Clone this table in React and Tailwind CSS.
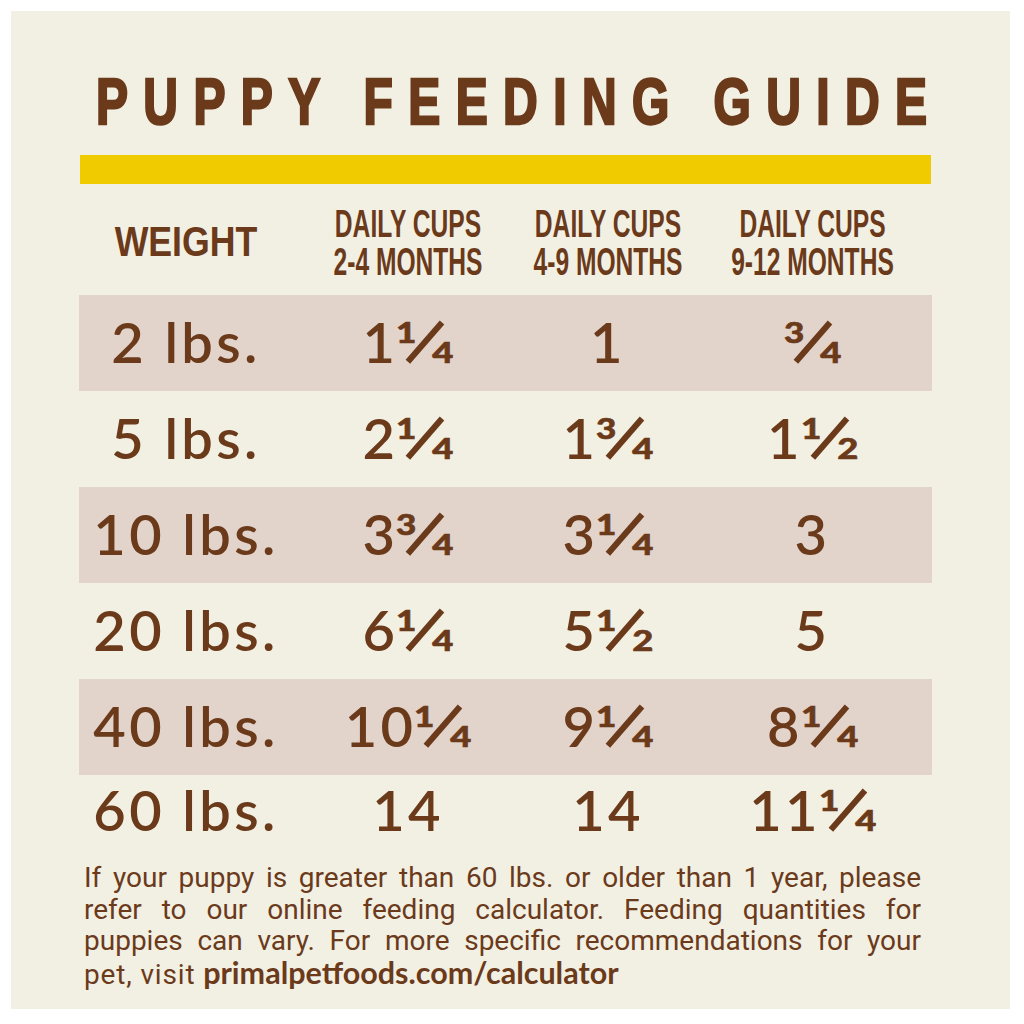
import React from "react";

const rows = [
  ["2 lbs.", "1¼", "1", "¾", true],
  ["5 lbs.", "2¼", "1¾", "1½", false],
  ["10 lbs.", "3¾", "3¼", "3", true],
  ["20 lbs.", "6¼", "5½", "5", false],
  ["40 lbs.", "10¼", "9¼", "8¼", true],
];

const num = { fontFamily: "Lato, 'Liberation Sans', sans-serif" };
const sans = { fontFamily: "'Liberation Sans', Arial, sans-serif" };
const body = { fontFamily: "Roboto, 'Liberation Sans', sans-serif" };

const FR = { "¼": ["1", "4"], "½": ["1", "2"], "¾": ["3", "4"] };

function Frac({ n, d, lead }) {
  return (
    <span className={`relative inline-block w-[57px] h-[40px] tracking-normal ${lead ? "-ml-[2px]" : ""}`}>
      <span className="absolute left-0 top-[-5px] scale-x-[1.25] origin-left text-[28px] leading-none font-black [-webkit-text-stroke:0.6px_#6b3a1b]">{n}</span>
      <span className="absolute left-[26px] top-[-7px] w-[5.5px] h-[52px] bg-[#6b3a1b] rotate-[41deg]" />
      <span className="absolute right-0 top-[15px] scale-x-[1.3] origin-right text-[28px] leading-none font-black [-webkit-text-stroke:0.6px_#6b3a1b]">{d}</span>
    </span>
  );
}

function Value({ v }) {
  const last = v.slice(-1);
  if (FR[last]) {
    const whole = v.slice(0, -1);
    return (
      <>
        {whole}
        <Frac n={FR[last][0]} d={FR[last][1]} lead={whole.length > 0} />
      </>
    );
  }
  return <>{v}</>;
}

function Row({ r, last }) {
  return (
    <div
      className={`grid grid-cols-[214px_230px_170px_239px] items-center pb-[3px] ${last ? "h-[72px]" : "h-[96px]"} ${r[4] ? "bg-[#e2d3cb]" : ""}`}
    >
      {r.slice(0, 4).map((c, i) => (
        <div key={i} className="text-center text-[56px] leading-none font-semibold tracking-[0.06em] text-[#6b3a1b] whitespace-nowrap" style={num}>
          <Value v={c} />
        </div>
      ))}
    </div>
  );
}

function HeadCell({ a, b }) {
  return (
    <div className="flex justify-center">
      <div className="scale-y-[1.59] origin-center text-center text-[24.6px] leading-[24px] font-bold text-[#6b3a1b] whitespace-nowrap" style={sans}>
        {a}
        <br />
        {b}
      </div>
    </div>
  );
}

export default function App() {
  return (
    <div className="w-[1024px] h-[1024px] bg-white pt-[11px] pl-[11px]">
      <div className="w-[999px] h-[998px] bg-[#f2f0e3] pl-[68px] pt-[60px]">
        <div className="w-[853px]">
          <div className="flex justify-center items-center h-[64px] pl-[12px]">
            <span className="scale-y-[1.333] origin-center text-[48px] leading-none font-bold tracking-[15.4px] -mr-[15.4px] text-[#6b3a1b] whitespace-nowrap [-webkit-text-stroke:1.9px_#6b3a1b]" style={sans}>
              PUPPY FEEDING GUIDE
            </span>
          </div>
          <div className="mt-[20px] h-[29px] w-[851px] ml-[1px] bg-[#efcb00]" />
          <div className="grid grid-cols-[214px_230px_170px_239px] items-center h-[111px] pt-[6px]">
            <div className="flex justify-center">
              <div className="scale-y-[1.2] origin-center text-[35.7px] leading-none font-bold text-[#6b3a1b] whitespace-nowrap" style={sans}>
                WEIGHT
              </div>
            </div>
            <HeadCell a="DAILY CUPS" b="2-4 MONTHS" />
            <HeadCell a="DAILY CUPS" b="4-9 MONTHS" />
            <HeadCell a="DAILY CUPS" b="9-12 MONTHS" />
          </div>
          {rows.map((r, i) => (
            <Row key={i} r={r} />
          ))}
          <Row r={["60 lbs.", "14", "14", "11¼", false]} last />
          <div className="mt-[15px] pl-[5px] pr-[11px] text-[28px] leading-[31.5px] text-[#6b3a1b]" style={body}>
            <div className="whitespace-nowrap text-justify [text-align-last:justify]">If your puppy is greater than 60 lbs. or older than 1 year, please</div>
            <div className="whitespace-nowrap text-justify [text-align-last:justify]">refer to our online feeding calculator. Feeding quantities for</div>
            <div className="whitespace-nowrap text-justify [text-align-last:justify]">puppies can vary. For more specific recommendations for your</div>
            <div className="whitespace-nowrap tracking-[0.03em]">
              pet, visit <span className="font-bold text-[30.5px] leading-[31.5px] tracking-normal" style={num}>primalpetfoods.com/calculator</span>
            </div>
          </div>
        </div>
      </div>
    </div>
  );
}
